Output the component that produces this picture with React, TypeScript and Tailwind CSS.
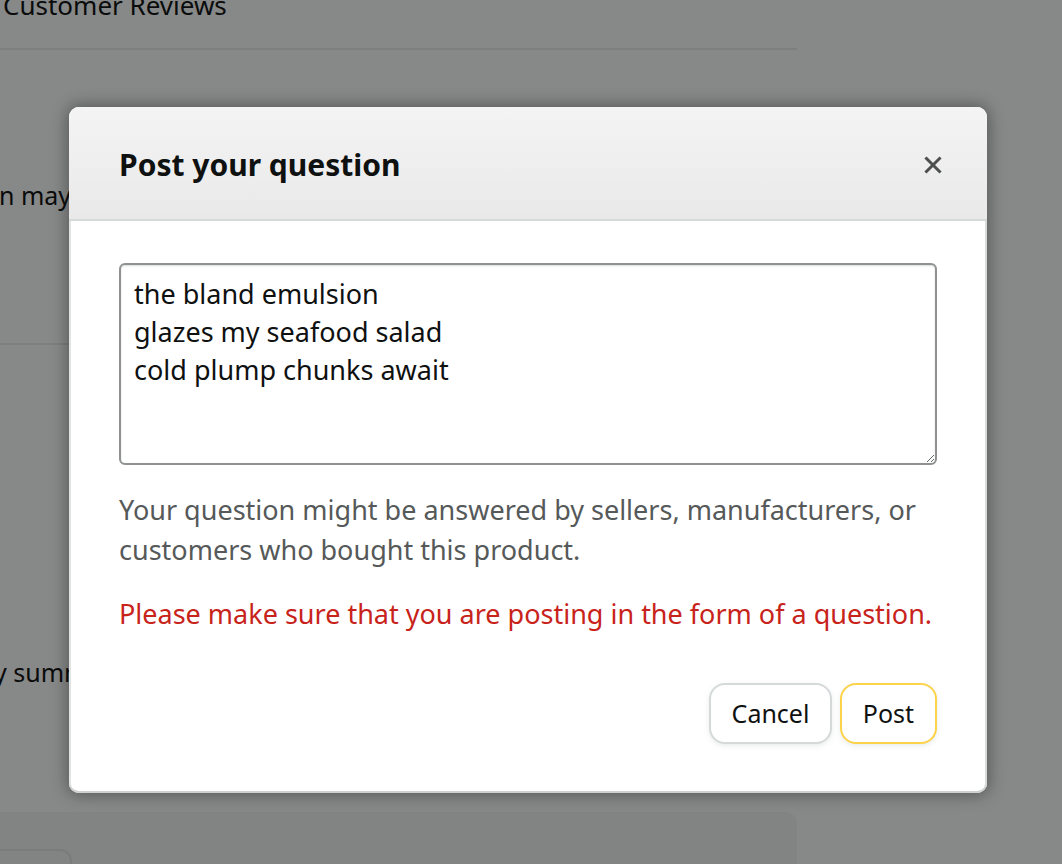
import React from "react";

export default function App() {
  const font = { fontFamily: '"Noto Sans", "Open Sans", Arial, sans-serif' };
  return (
    <div className="relative w-[1062px] h-[864px] overflow-hidden bg-[#878888] text-[#0a0b0b]" style={font}>
      {/* dimmed page underneath */}
      <div className="w-[797px] flex flex-col">
        <div className="h-[48px] flex items-start">
          <div className="pl-[3px] -mt-[13px] text-[26px] leading-[36px]">Customer Reviews</div>
        </div>
        <div className="h-[2px] bg-[#7d7e7e]" />
        <div className="h-[293px] flex flex-col">
          <div className="mt-[129px] -ml-[1px] text-[25px] leading-[32px] whitespace-nowrap">n may be answered by sellers</div>
        </div>
        <div className="h-[2px] bg-[#7d7e7e]" />
        <div className="h-[467px] flex flex-col">
          <div className="mt-[311px] -ml-[6px] text-[25px] leading-[32px] whitespace-nowrap">y summary of customer reviews</div>
        </div>
        <div className="h-[60px] bg-[#828383] rounded-tr-[12px] flex flex-col">
          <div className="mt-[37px] w-[72px] h-[30px] border-2 border-[#7a7b7b] rounded-tr-[12px] border-l-0" />
        </div>
      </div>

      {/* modal */}
      <div className="absolute left-[69px] top-[107px] w-[918px] h-[686px] bg-white rounded-[10px] overflow-hidden flex flex-col shadow-[0_0_16px_2px_rgba(0,0,0,0.35),inset_0_-2px_0_#cfd1d1,inset_2px_0_0_#e2e3e3,inset_-2px_0_0_#dadbdb]">
        <div className="h-[114px] shrink-0 bg-gradient-to-b from-[#f4f4f4] to-[#e9e9e9] border-b-2 border-[#d5d9d9] flex items-center justify-between pl-[50px] pr-[45px] pt-[4px]">
          <div className="text-[30px] leading-[36px] font-bold text-[#0f1111]">Post your question</div>
          <svg width="18" height="18" viewBox="0 0 18 18">
            <path d="M2.5 2.5 L15.5 15.5 M15.5 2.5 L2.5 15.5" stroke="#4d4f4f" strokeWidth="3" strokeLinecap="square" />
          </svg>
        </div>
        <div className="flex flex-col px-[50px] pt-[42px]">
          <textarea
            defaultValue={"the bland emulsion\nglazes my seafood salad\ncold plump chunks await"}
            className="w-full h-[202px] border-2 border-[#8f9292] rounded-[6px] px-[13px] py-[10px] text-[27px] leading-[38px] text-[#0f1111] outline-none shadow-[inset_0_1px_2px_rgba(15,17,17,0.15)]"
            style={font}
          />
          <div className="mt-[25px] text-[27px] leading-[40px] text-[#565959]">
            Your question might be answered by sellers, manufacturers, or customers who bought this product.
          </div>
          <div className="mt-[24px] text-[27px] leading-[40px] text-[#c8231b]">
            Please make sure that you are posting in the form of a question.
          </div>
          <div className="mt-[49px] flex justify-end gap-[8px]">
            <button className="w-[123px] h-[61px] bg-white border-2 border-[#d5d9d9] rounded-[16px] text-[25px] text-[#0f1111] shadow-[0_2px_5px_0_rgba(213,217,217,0.5)]" style={font}>
              Cancel
            </button>
            <button className="w-[97px] h-[61px] bg-white border-2 border-[#fcd34a] rounded-[16px] text-[25px] text-[#0f1111] shadow-[0_2px_5px_0_rgba(213,217,217,0.5)]" style={font}>
              Post
            </button>
          </div>
        </div>
      </div>
    </div>
  );
}
